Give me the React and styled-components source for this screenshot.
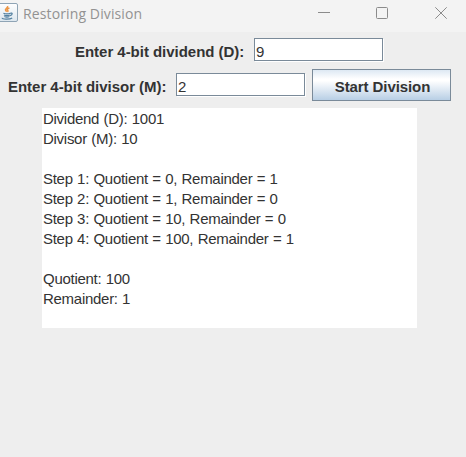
import React from "react";
import styled, { createGlobalStyle } from "styled-components";

const GlobalStyle = createGlobalStyle`
  * { box-sizing: border-box; }
  body { margin: 0; background: #eeeeee; overflow: hidden; }
`;

const Window = styled.main`
  width: 466px;
  height: 457px;
  display: flex;
  flex-direction: column;
  background: #eeeeee;
  color: #333333;
  font-family: "Liberation Sans", Arial, sans-serif;
  font-size: 15px;
`;

const TitleBar = styled.header`
  height: 32px;
  display: flex;
  align-items: flex-start;
  background: #f3f3f3;
  flex: none;
`;

const Title = styled.h1`
  margin: 3px auto 0 5px;
  font: 400 14px/21px "Open Sans", "Noto Sans", sans-serif;
  letter-spacing: ${(p) => p.$tracking};
  color: #929292;
  white-space: nowrap;
`;

const Controls = styled.div`
  display: grid;
  grid-template-columns: 58px 59px 12px;
  margin: 7px 19px 0 0;
`;

const Glyph = styled.svg`
  display: block;
  flex: none;
`;

const Row = styled.div`
  display: flex;
  flex: none;
  align-items: flex-start;
  height: ${(p) => p.$height}px;
  margin-top: ${(p) => p.$top}px;
  padding-left: ${(p) => p.$left}px;
`;

const Label = styled.label`
  width: ${(p) => p.$width}px;
  flex: none;
  margin-top: ${(p) => p.$top}px;
  font-weight: 700;
  line-height: 20px;
  letter-spacing: -0.03px;
  white-space: nowrap;
`;

const Field = styled.input`
  width: 129px;
  height: 23px;
  flex: none;
  margin: ${(p) => p.$top || 0}px 0 0;
  padding: 3px 0 0 1px;
  border: 1px solid #7a8a99;
  border-radius: 0;
  box-shadow: 1px 1px 0 #ffffff;
  outline: none;
  background: #ffffff;
  color: #333333;
  font: inherit;
`;

const StartButton = styled.button`
  width: 139px;
  height: 32px;
  flex: none;
  margin: 0 0 0 7px;
  padding: 3px 0 0 2px;
  border: 1px solid #7a8a99;
  border-radius: 0;
  background: linear-gradient(#dde8f3 0%, #ffffff 30%, #ffffff 36%, #b8cfe5 100%);
  color: #333333;
  font: inherit;
  font-weight: 700;
  letter-spacing: -0.08px;
  white-space: nowrap;
`;

const Output = styled.section`
  width: 375px;
  height: 220px;
  flex: none;
  margin: 7px 0 0 42px;
  padding: 1px 0 0 1px;
  background: #ffffff;
`;

const Line = styled.div`
  height: 20px;
  line-height: 20px;
  letter-spacing: -0.28px;
  word-spacing: 0.5px;
  white-space: pre;
`;

const lines = [
  "Dividend (D): 1001",
  "Divisor (M): 10",
  "",
  "Step 1: Quotient = 0, Remainder = 1",
  "Step 2: Quotient = 1, Remainder = 0",
  "Step 3: Quotient = 10, Remainder = 0",
  "Step 4: Quotient = 100, Remainder = 1",
  "",
  "Quotient: 100",
  "Remainder: 1",
];

function JavaIcon() {
  return (
    <Glyph width="18" height="24" viewBox="0 0 18 24">
      <defs>
        <linearGradient id="tile" x1="0" y1="0" x2="0" y2="1">
          <stop offset="0" stopColor="#ffffff" />
          <stop offset="1" stopColor="#dce6ee" />
        </linearGradient>
      </defs>
      <rect x="-3" y="3.5" width="20.5" height="18" rx="1.5" fill="url(#tile)" stroke="#8fa4b5" />
      <path d="M7.6 6c.8 2-3.1 2.6-2 4.3.3.6.9.9 1.1 1.4M9.4 8c-2.8 1-2.6 1.6-1.6 2.4.4.6.1.9-.4 1.2" fill="none" stroke="#ed9645" strokeWidth="1.5" />
      <path d="M3.4 13.2c2.1.8 5.3.7 7 0M4 15c1.7.8 4.2.8 5.8 0M4.4 16.5c1.5.7 3.6.7 5 0M10.4 13.2c2.3-.8 2.5 1.6-.3 2.4M2.4 17.8c-1.3 1.6 7.5 1.8 9.8.2" fill="none" stroke="#527f9f" strokeWidth="1.2" />
    </Glyph>
  );
}

export default function App() {
  return (
    <Window>
      <GlobalStyle />
      <TitleBar>
        <JavaIcon />
        <Title $tracking="0.12px">Restoring Division</Title>
        <Controls>
          <Glyph width="12" height="12" viewBox="0 0 12 12">
            <path d="M0 5.5h12" stroke="#8b8b8b" />
          </Glyph>
          <Glyph width="12" height="12" viewBox="0 0 12 12">
            <rect x=".5" y=".5" width="11" height="11" rx="1" fill="none" stroke="#8b8b8b" />
          </Glyph>
          <Glyph width="12" height="12" viewBox="0 0 12 12">
            <path d="M.3.3l11.4 11.4M11.7.3L.3 11.7" stroke="#8b8b8b" />
          </Glyph>
        </Controls>
      </TitleBar>
      <Row $top={6} $height={23} $left={75}>
        <Label htmlFor="dividend" $width={179} $top={4}>Enter 4-bit dividend (D):</Label>
        <Field id="dividend" defaultValue="9" />
      </Row>
      <Row $top={8} $height={32} $left={8}>
        <Label htmlFor="divisor" $width={168} $top={8}>Enter 4-bit divisor (M):</Label>
        <Field id="divisor" defaultValue="2" $top={4} />
        <StartButton>Start Division</StartButton>
      </Row>
      <Output>
        {lines.map((line, i) => (
          <Line key={i}>{line}</Line>
        ))}
      </Output>
    </Window>
  );
}
